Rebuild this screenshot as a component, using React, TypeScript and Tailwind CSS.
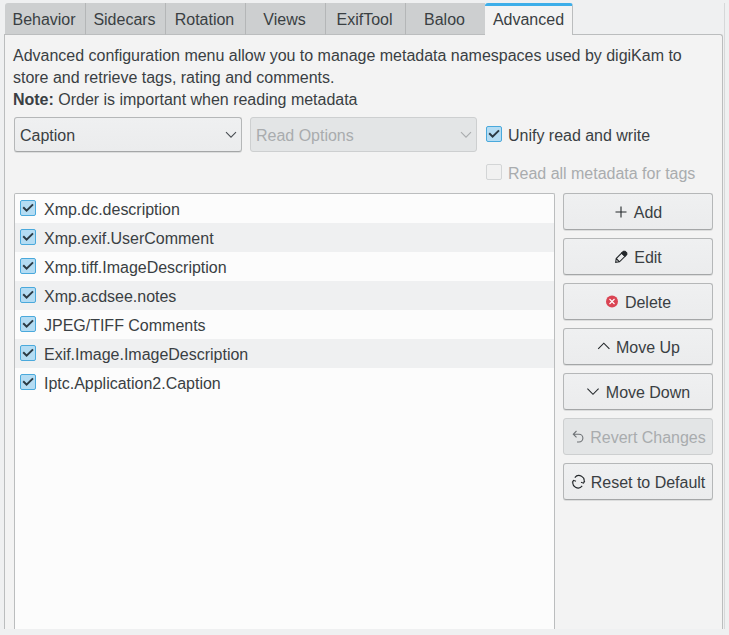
import type { ReactNode } from "react";

const tabs = ["Behavior", "Sidecars", "Rotation", "Views", "ExifTool", "Baloo"];

const namespaces = [
  "Xmp.dc.description",
  "Xmp.exif.UserComment",
  "Xmp.tiff.ImageDescription",
  "Xmp.acdsee.notes",
  "JPEG/TIFF Comments",
  "Exif.Image.ImageDescription",
  "Iptc.Application2.Caption",
];

function CheckBox({ checked = true }: { checked?: boolean }) {
  return (
    <span
      className={`flex h-4 w-4 shrink-0 items-center justify-center rounded-[2px] border ${
        checked ? "border-[#4aa9dc] bg-[#b4dcf3]" : "border-[#d3d5d6] bg-[#f1f1f1]"
      }`}
    >
      {checked && (
        <svg width="14" height="14" viewBox="0 0 14 14" fill="none" stroke="#2b3a44" strokeWidth="2">
          <path d="M2.2 6.2 5.6 9.6 12 3.4" />
        </svg>
      )}
    </span>
  );
}

function Chevron({ color }: { color: string }) {
  return (
    <svg width="12" height="8" viewBox="0 0 12 8" fill="none" stroke={color} strokeWidth="1.1">
      <path d="M1 1.2 6 6.2 11 1.2" />
    </svg>
  );
}

function Combo({ label, disabled = false, width }: { label: string; disabled?: boolean; width: string }) {
  return (
    <div
      className={`flex h-[35px] items-center justify-between rounded-[3px] border pl-[5px] pr-1 ${width} ${
        disabled
          ? "border-[#cdcfd0] bg-[#e3e5e6] text-[#a9acae]"
          : "border-[#b5b7b8] border-b-[#a4a6a7] bg-linear-to-b from-[#eff0f1] to-[#ebeced] shadow-[0_1px_0_#dcdddd]"
      }`}
    >
      <span className="pt-[2px]">{label}</span>
      <Chevron color={disabled ? "#a9acae" : "#4a4f53"} />
    </div>
  );
}

function Icon({ children, color = "#24282b" }: { children: ReactNode; color?: string }) {
  return (
    <svg className="-ml-px mr-px shrink-0" width="16" height="16" viewBox="0 0 16 16" fill="none" stroke={color} strokeWidth="1.1">
      {children}
    </svg>
  );
}

function ActionButton({ label, icon, disabled = false }: { label: string; icon: ReactNode; disabled?: boolean }) {
  return (
    <button
      className={`flex h-[37px] w-[150px] items-center justify-center gap-1 whitespace-nowrap rounded-[3px] border ${
        disabled
          ? "border-[#cdcfd0] bg-[#e3e5e6] text-[#a9acae]"
          : "border-[#b5b7b8] border-b-[#a4a6a7] bg-linear-to-b from-[#eff0f1] to-[#ebeced] shadow-[0_1px_0_#dcdddd]"
      }`}
    >
      {icon}
      <span className="pt-[2px]">{label}</span>
    </button>
  );
}

export default function App() {
  return (
    <div className="h-[635px] w-[729px] overflow-hidden bg-[#eff0f1] font-['Liberation_Sans',Arial,sans-serif] text-[16px] leading-[22px] tracking-[-0.012px] text-[#3a3f43]">
      <div className="flex h-[629px] overflow-hidden pl-1 pt-[3px]">
        <div className="flex w-[719px] flex-col">
          <div className="z-10 -mb-px flex h-8 shrink-0 pl-px">
            {tabs.map((tab, i) => (
              <div
                key={tab}
                className={`flex h-8 w-20 items-center justify-center border-b border-b-[#bbbdbe] bg-[#cdcfd0] pt-[2px] pr-[2px] ${
                  i === 0 ? "rounded-tl-[3px]" : "border-l border-l-[#b4b6b7]"
                }`}
              >
                {tab}
              </div>
            ))}
            <div className="flex h-8 w-[88px] items-center justify-center rounded-t-[3px] border-r border-t-[3px] border-r-[#bbbdbe] border-t-[#3daee9] bg-[#f3f3f3] pb-px">
              Advanced
            </div>
          </div>

          <div className="flex flex-1 flex-col rounded-tr-[3px] border-x border-t border-[#bbbdbe] bg-[#f3f3f3] pl-[9px] pr-[9px] pt-[10px]">
            <p className="-ml-px w-[690px]">
              Advanced configuration menu allow you to manage metadata namespaces used by digiKam to
              <br />
              store and retrieve tags, rating and comments.
              <br />
              <b>Note:</b> Order is important when reading metadata
            </p>

            <div className="mt-[6px] flex h-[76px] items-start">
              <Combo label="Caption" width="w-[228px]" />
              <div className="ml-2">
                <Combo label="Read Options" disabled width="w-[227px]" />
              </div>
              <div className="ml-[9px] flex flex-col gap-4 pt-2">
                <label className="flex items-start gap-[6px]">
                  <span className="pt-px"><CheckBox /></span>
                  Unify read and write
                </label>
                <label className="flex items-start gap-[6px] text-[#a9acae]">
                  <span className="pt-px"><CheckBox checked={false} /></span>
                  Read all metadata for tags
                </label>
              </div>
            </div>

            <div className="flex flex-1 gap-2">
              <div className="w-[541px] rounded-t-[2px] border-x border-t border-[#bbbdbe] bg-[#fcfcfc]">
                {namespaces.map((name) => (
                  <div key={name} className="flex h-[29px] items-center gap-2 pl-[5px] even:bg-[#eff0f1]">
                    <span className="pb-[2px]"><CheckBox /></span>
                    <span className="pt-[3px]">{name}</span>
                  </div>
                ))}
              </div>
              <div className="flex flex-col gap-2">
                <ActionButton label="Add" icon={<Icon><path d="M8 2.5v11M2.5 8h11" /></Icon>} />
                <ActionButton
                  label="Edit"
                  icon={
                    <Icon>
                      <path d="M2.7 13.3 3.2 9.5 8.7 4 12 7.3 6.5 12.8ZM3.2 9.5 6.5 12.8" />
                      <path d="M8.7 4 10.5 2.2H12L13.8 4V5.5L12 7.3Z" fill="#24282b" />
                    </Icon>
                  }
                />
                <ActionButton
                  label="Delete"
                  icon={
                    <Icon color="#fff">
                      <circle cx="8" cy="7.5" r="6" fill="#da4453" stroke="none" />
                      <path d="m5.5 5 5 5m0-5-5 5" />
                    </Icon>
                  }
                />
                <ActionButton label="Move Up" icon={<Icon><path d="M3.2 9.8 8.8 4.2 14.4 9.8" /></Icon>} />
                <ActionButton label="Move Down" icon={<Icon><path d="M2.4 4.7 8 10.3 13.6 4.7" /></Icon>} />
                <ActionButton
                  label="Revert Changes"
                  disabled
                  icon={<Icon color="#6e7275"><path d="M7.5 2 4.3 5.2 7.5 8.4M4.3 5.2H10a3.9 3.9 0 0 1 0 7.8H8" /></Icon>}
                />
                <ActionButton
                  label="Reset to Default"
                  icon={
                    <Icon>
                      <path d="M4.8 3.6A5.2 5.2 0 0 1 13.7 8.8M11 8.3 13.5 9.2 14.8 6.9M12.2 11.9A5.2 5.2 0 0 1 3.3 6.7M2.2 8.6 3.5 6.3 6 7.2" />
                    </Icon>
                  }
                />
              </div>
            </div>
          </div>
        </div>
        <div className="ml-px w-px bg-[#d6d8d9]" />
      </div>
    </div>
  );
}
